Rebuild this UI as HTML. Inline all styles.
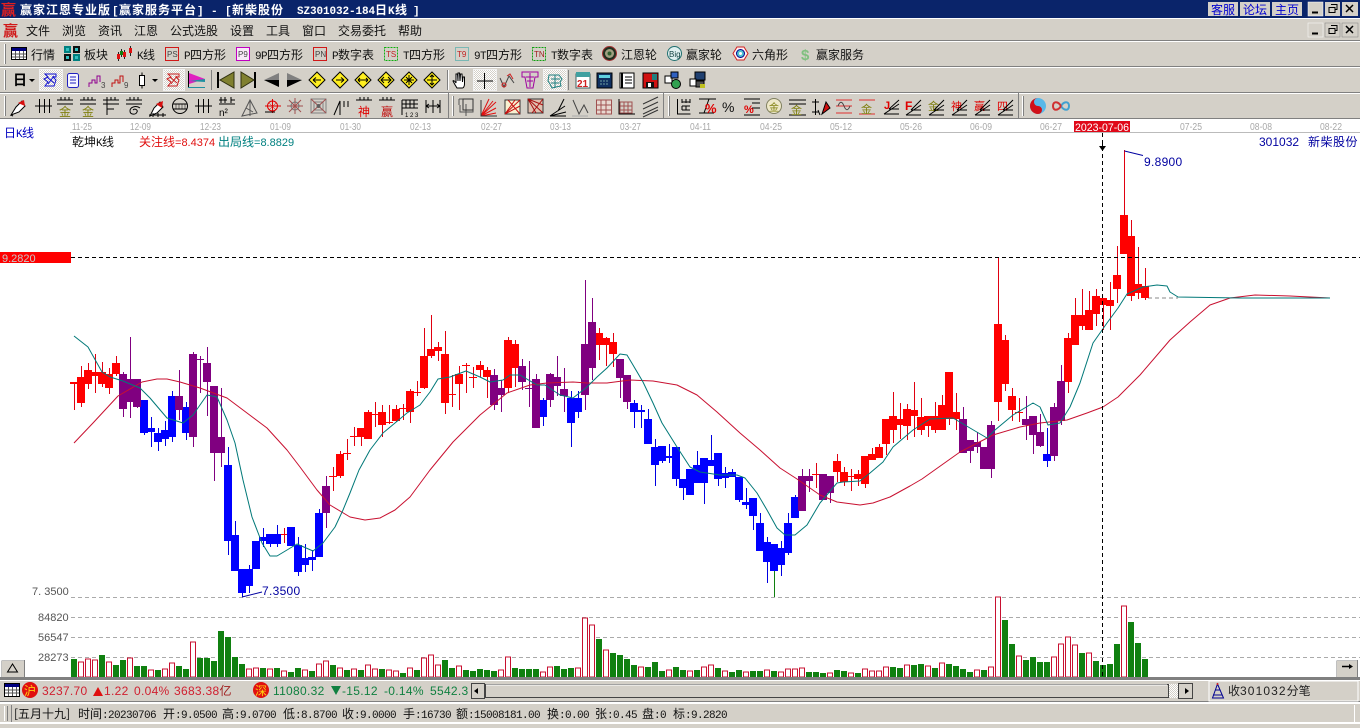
<!DOCTYPE html>
<html><head><meta charset="utf-8"><style>
html,body{margin:0;padding:0;background:#d4d0c8;width:1360px;height:728px;overflow:hidden}
svg{display:block;position:absolute;left:0;top:0}
text{font-family:"WenQuanYi Zen Hei","Noto Sans CJK SC",sans-serif;font-size:12px;white-space:pre}
.m{font-family:"Liberation Mono",monospace;font-size:11px;letter-spacing:-.6px}
.mb{font-family:"Liberation Mono",monospace;font-size:11px;letter-spacing:-.1px}
.a{font-family:"Liberation Sans","Noto Sans CJK SC",sans-serif}
.d{font-family:"Liberation Sans",sans-serif;font-size:10px;fill:#a8a8a8}
.l{font-family:"Liberation Sans",sans-serif;font-size:11px;fill:#555}
.s{font-family:"Liberation Sans",sans-serif;font-size:12px;letter-spacing:.3px}
.t{font-family:"Liberation Mono",monospace;font-size:11px;letter-spacing:-.6px;fill:#111}
.k{fill:none;stroke:#000}
.r{fill:none;stroke:#e00000}
.g{fill:none;stroke:#444}
.sm{font-family:"Liberation Sans",sans-serif;font-size:8px}
</style></head><body>
<svg width="1360" height="728" viewBox="0 0 1360 728" xmlns="http://www.w3.org/2000/svg">
<defs><pattern id="dz" width="2" height="2" patternUnits="userSpaceOnUse"><rect width="2" height="2" fill="#ffffff"/><rect width="1" height="1" fill="#d4d0c8"/><rect x="1" y="1" width="1" height="1" fill="#d4d0c8"/></pattern></defs>
<!-- title bar -->
<rect width="1360" height="18" fill="#0a246a"/>
<rect y="18" width="1360" height="1" fill="#fff"/>
<text x="1" y="15" fill="#e02020" font-weight="bold" style="font-size:15px">赢</text>
<g fill="#fff" font-weight="bold">
<text x="20" y="14" style="letter-spacing:1px">赢家江恩专业版</text>
<text x="112" y="14" class="mb">[</text>
<text x="119" y="14" style="letter-spacing:1px">赢家服务平台</text>
<text x="197" y="14" class="mb">]</text>
<text x="211" y="14" class="mb">-</text>
<text x="225" y="14" class="mb">[</text>
<text x="232" y="14" style="letter-spacing:1px">新柴股份</text>
<text x="297" y="14" class="mb">SZ301032-184</text>
<text x="375" y="14">日</text>
<text x="388" y="14" class="mb">K</text>
<text x="395" y="14">线</text>
<text x="413" y="14" class="mb">]</text>
</g>
<g>
<rect x="1208" y="2" width="30" height="14" fill="#d4d0c8"/><rect x="1240" y="2" width="30" height="14" fill="#d4d0c8"/><rect x="1272" y="2" width="30" height="14" fill="#d4d0c8"/>
<text x="1211" y="14" fill="#0000d0">客服</text><text x="1243" y="14" fill="#0000d0">论坛</text><text x="1275" y="14" fill="#0000d0">主页</text>
</g>
<g id="wb">
<rect x="1308" y="2" width="15" height="14" fill="#d4d0c8" stroke="#fff" stroke-width=".5"/><rect x="1325" y="2" width="15" height="14" fill="#d4d0c8"/><rect x="1342" y="2" width="16" height="14" fill="#d4d0c8"/>
<path d="M1312 12.5h6" stroke="#000" stroke-width="2"/>
<path d="M1331 4.5h6v5h-2M1329 7.5h6v5h-6z" class="k"/>
<path d="M1346 5l7 7M1353 5l-7 7" stroke="#000" stroke-width="1.5"/>
</g>
<g transform="translate(0,21)">
<rect x="1308" y="2" width="15" height="14" fill="#d4d0c8" stroke="#fff" stroke-width=".5"/><rect x="1325" y="2" width="15" height="14" fill="#d4d0c8" stroke="#808080" stroke-width=".5"/><rect x="1342" y="2" width="16" height="14" fill="#d4d0c8" stroke="#808080" stroke-width=".5"/>
<path d="M1312 12.5h6" stroke="#000" stroke-width="2"/>
<path d="M1331 4.5h6v5h-2M1329 7.5h6v5h-6z" class="k"/>
<path d="M1346 5l7 7M1353 5l-7 7" stroke="#000" stroke-width="1.5"/>
</g>
<!-- menu -->
<text x="3" y="36" fill="#d01818" style="font-size:15px" font-weight="bold">赢</text>
<g fill="#111">
<text x="26" y="35">文件</text><text x="62" y="35">浏览</text><text x="98" y="35">资讯</text><text x="134" y="35">江恩</text><text x="170" y="35">公式选股</text><text x="230" y="35">设置</text><text x="266" y="35">工具</text><text x="302" y="35">窗口</text><text x="338" y="35">交易委托</text><text x="398" y="35">帮助</text>
</g>
<!-- band separators -->
<g fill="#808080"><rect y="40" width="1360" height="1"/><rect y="66" width="1360" height="1"/><rect y="92" width="1360" height="1"/><rect y="118" width="1360" height="1"/></g>
<g fill="#fff"><rect y="41" width="1360" height="1"/><rect y="67" width="1360" height="1"/><rect y="93" width="1360" height="1"/></g>
<g fill="#fff"><rect x="4" y="44" width="1" height="20"/><rect x="4" y="70" width="1" height="20"/><rect x="4" y="96" width="1" height="20"/><rect x="452" y="96" width="1" height="20"/><rect x="668" y="96" width="1" height="20"/><rect x="1022" y="96" width="1" height="20"/><rect x="448" y="70" width="1" height="20"/></g>
<g fill="#808080"><rect x="5" y="44" width="1" height="20"/><rect x="5" y="70" width="1" height="20"/><rect x="5" y="96" width="1" height="20"/><rect x="453" y="96" width="1" height="20"/><rect x="669" y="96" width="1" height="20"/><rect x="1023" y="96" width="1" height="20"/><rect x="211" y="70" width="1" height="20"/><rect x="447" y="70" width="1" height="20"/><rect x="568" y="70" width="1" height="20"/><rect x="448" y="93" width="1" height="25"/><rect x="663" y="93" width="1" height="25"/><rect x="1018" y="93" width="1" height="25"/></g>
<!-- row 1 -->
<rect x="11.5" y="47.5" width="15" height="12" fill="#fff" stroke="#000"/><rect x="12" y="48" width="14" height="3" fill="#000080"/><path d="M12 54h14M12 57h14M15.5 51v8M19.5 51v8M23.5 51v8" stroke="#555"/>
<g fill="#008080"><rect x="64" y="46" width="7" height="7"/><rect x="73" y="54" width="7" height="7"/></g><g fill="#111"><rect x="73" y="46" width="7" height="7"/><rect x="64" y="54" width="7" height="7"/></g><g fill="#30c0c0"><rect x="66" y="48" width="3" height="3"/><rect x="75" y="56" width="3" height="3"/><rect x="75" y="48" width="3" height="3"/><rect x="66" y="56" width="3" height="3"/></g>
<path d="M118.5 52v9M124.5 50v9M130.5 46v10" stroke="#222"/><path d="M121.5 49v8" stroke="#222"/><g fill="#e01010"><rect x="117" y="54" width="3" height="5"/><rect x="123" y="52" width="3" height="5"/><rect x="129" y="48" width="3" height="5"/></g><rect x="120" y="51" width="3" height="4" fill="#108010"/>
<text x="31" y="59" fill="#111">行情</text><text x="84" y="59" fill="#111">板块</text>
<text x="137" y="59" fill="#111"><tspan class="m">K</tspan>线</text>
<g>
<rect x="165.5" y="47.5" width="13" height="13" fill="none" stroke="#d01818"/><text x="167" y="57" class="sm" fill="#444">PS</text>
<rect x="236.5" y="47.5" width="13" height="13" fill="#f8e8f8" stroke="#c000c0"/><text x="238" y="57" class="sm" fill="#444">P9</text>
<rect x="313.5" y="47.5" width="13" height="13" fill="none" stroke="#d01818"/><text x="315" y="57" class="sm" fill="#444">PN</text>
<rect x="384.5" y="47.5" width="13" height="13" fill="none" stroke="#10b010" stroke-dasharray="2 1"/><text x="386" y="57" class="sm" fill="#c02020">TS</text>
<rect x="455.5" y="47.5" width="13" height="13" fill="none" stroke="#20a0a0" stroke-dasharray="1 1"/><text x="457" y="57" class="sm" fill="#c02020">T9</text>
<rect x="532.5" y="47.5" width="13" height="13" fill="none" stroke="#10a010" stroke-dasharray="2 1"/><text x="534" y="57" class="sm" fill="#a02020">TN</text>
</g>
<g fill="#111">
<text x="184" y="59"><tspan class="m">P</tspan>四方形</text>
<text x="255" y="59"><tspan class="m">9P</tspan>四方形</text>
<text x="332" y="59"><tspan class="m">P</tspan>数字表</text>
<text x="403" y="59"><tspan class="m">T</tspan>四方形</text>
<text x="474" y="59"><tspan class="m">9T</tspan>四方形</text>
<text x="551" y="59"><tspan class="m">T</tspan>数字表</text>
<text x="621" y="59">江恩轮</text><text x="686" y="59">赢家轮</text><text x="752" y="59">六角形</text><text x="816" y="59">赢家服务</text>
</g>
<circle cx="609.5" cy="53.5" r="7" fill="#203020" stroke="#a03030"/><circle cx="609.5" cy="53.5" r="4.5" fill="#a0a080"/><circle cx="609.5" cy="53.5" r="2" fill="#306030"/>
<circle cx="674.5" cy="53.5" r="7" fill="#dff0f0" stroke="#207070"/><text x="669" y="57" class="sm" fill="#104040">Big</text>
<path d="M737 47h7l4 6.5-4 6.5h-7l-4-6.5z" fill="#fff0f0" stroke="#d02020"/><circle cx="740.5" cy="53.5" r="4" fill="#50c0d0" stroke="#000090"/><circle cx="740.5" cy="53.5" r="1.5" fill="#fff"/>
<text x="801" y="60" fill="#80c080" font-weight="bold" style="font-size:15px" class="a">$</text>
<!-- row 2 -->
<text x="13" y="85" fill="#000" font-weight="bold" style="font-size:14px">日</text>
<path d="M29 79h6l-3 3z" fill="#000"/>
<rect x="39.5" y="69.5" width="23" height="21" fill="url(#dz)" stroke="#f0f0f0"/>
<path d="M45 74h11v3h-3l3 3-2 6h-9l3-4-4-3 4-2zM47 77l7 6M54 76l-6 8" fill="none" stroke="#1010d0"/>
<rect x="67.5" y="73.5" width="11" height="14" rx="2" fill="#f4f4ff" stroke="#2020c0"/><path d="M70 77h6M70 80h6M70 83h6" stroke="#2020c0"/>
<path d="M89 87v-4h3v-3h3v3h2v-7h3v6" fill="none" stroke="#900090"/><text x="101" y="88" class="sm" fill="#444">3</text>
<path d="M112 87v-4h3v-3h3v3h2v-7h3v6" fill="none" stroke="#c01010"/><text x="124" y="88" class="sm" fill="#444">9</text>
<path d="M142 72.5v16" stroke="#000"/><rect x="139.5" y="75.5" width="5" height="10" fill="#fff" stroke="#000"/>
<path d="M152 79h6l-3 3z" fill="#000"/>
<rect x="163.5" y="69.5" width="21" height="21" fill="url(#dz)" stroke="#f0f0f0"/>
<path d="M168 74h11v3h-3l3 3-2 6h-9l3-4-4-3 4-2zM170 77l7 6M177 76l-6 8" fill="none" stroke="#c82020"/>
<path d="M188.5 71v17" stroke="#000"/><path d="M189 73l16 6-16 5z" fill="#e020c0"/><path d="M189 81l16-2v3z" fill="#2090a0"/><path d="M188 87.5h17" stroke="#2090a0"/>
<path d="M217.5 72v16M218.5 72v16" stroke="#000"/><path d="M234 72v16l-14-8z" fill="#808030" stroke="#303010"/>
<path d="M255.5 72v16M254.5 72v16" stroke="#000"/><path d="M241 72v16l13-8z" fill="#808030" stroke="#303010"/>
<path d="M264 80l15-7v14z" fill="#808080"/><path d="M264 80l15 0v7z" fill="#000"/>
<path d="M302 80l-15-7v14z" fill="#808080"/><path d="M302 80l-15 0v7z" fill="#000"/>
<g fill="#ffef20" stroke="#000"><path d="M317 72l8 8-8 8-8-8z"/><path d="M340 72l8 8-8 8-8-8z"/><path d="M363 72l8 8-8 8-8-8z"/><path d="M386 72l8 8-8 8-8-8z"/><path d="M409 72l8 8-8 8-8-8z"/><path d="M432 72l8 8-8 8-8-8z"/></g>
<path d="M313 80h8M313 80l3-2.500M313 80l3 2.500M336 80h8M344 80l-3-2.500M344 80l-3 2.500M358 80h10M358 80l2-2M358 80l2 2M368 80l-2-2M368 80l-2 2M381 80h10M384 77l-3 3 3 3M388 77l3 3-3 3M409 75v10M404 80h10M406 77l6 6M412 77l-6 6M432 75v10M427 80h10M430 77l2-2 2 2M430 83l2 2 2-2" stroke="#000" fill="none"/>
<path d="M457 88c-2-3-3-5-4-7 0-1 2 0 3 2l0-9 1.500 0 .5 7 0-8 1.500 0 .5 8 .5-7 1.500 0 .5 8 .5-5 1.500 0 0 7c0 2-1 4-2 4z" fill="#fff" stroke="#000"/>
<rect x="473.500" y="69.500" width="23" height="21" fill="url(#dz)" stroke="#f0f0f0"/><path d="M484.500 73v16M477 81h16" stroke="#000"/>
<path d="M500 78l4 9 5-11 5 7" fill="none" stroke="#444"/><circle cx="504" cy="85" r="2" fill="none" stroke="#d02020"/><path d="M507 76l3-2 3 5" fill="none" stroke="#d02020"/>
<path d="M522 72h16v5h-3l-2 11h-6l-2-11h-3z" fill="none" stroke="#a000a0"/><path d="M526 77h8M530 73v14M527 81h6" stroke="#a000a0"/>
<rect x="543.500" y="69.500" width="23" height="21" fill="url(#dz)" stroke="#f0f0f0"/>
<path d="M549 75h10l3 4-2 3 1 4-5 1-4 1-2-4-2-3zM551 79h9M551 83h8M555 75v13" fill="none" stroke="#208080"/>
<rect x="576" y="74" width="14" height="14" fill="#fff" stroke="#406060"/><rect x="576" y="72" width="14" height="5" fill="#40a0a0"/><text x="577" y="87" class="sm" fill="#d02020" font-weight="bold" style="font-size:10px">21</text>
<rect x="597" y="73" width="15" height="15" fill="#103060" stroke="#000"/><rect x="599" y="75" width="11" height="3" fill="#60d0e0"/><path d="M600 81h9M600 84h9" stroke="#70a0a0" stroke-dasharray="2 1"/>
<rect x="620" y="73" width="14" height="15" fill="#fff" stroke="#000"/><path d="M622 73v15" stroke="#000" stroke-width="2"/><path d="M625 77h7M625 80h7M625 83h7" stroke="#000"/>
<rect x="643" y="73" width="15" height="15" fill="#d01010" stroke="#000"/><rect x="652" y="74" width="5" height="6" fill="#208080"/><rect x="646" y="82" width="8" height="6" fill="#111"/><rect x="648" y="83" width="3" height="4" fill="#fff"/>
<rect x="665" y="76" width="7" height="7" fill="#fff" stroke="#000"/><rect x="671" y="72" width="7" height="6" fill="#3060c0" stroke="#000"/><circle cx="676" cy="84" r="4.500" fill="#30a050" stroke="#000"/>
<rect x="695" y="72" width="10" height="8" fill="#204070" stroke="#000"/><rect x="690" y="79" width="6" height="7" fill="#fff" stroke="#000"/><rect x="696" y="81" width="8" height="6" fill="#505050" stroke="#000"/><rect x="700" y="84" width="5" height="4" fill="#c0c020"/>
<!-- row 3 -->
<path d="M11 115l5-8 6-6 3 5-6 6z" fill="#fff" stroke="#000"/><path d="M18 103l6-3 1 6z" fill="#d81010"/><path d="M11 115l2 1" stroke="#000"/>
<path d="M39.500 99v14M44.500 99v14M49.500 99v14M35 106h17" class="k"/>
<g transform="translate(0,0)"><path d="M57 100h16M61 97v3M65 97v3M69 97v3M57 104h16" class="k"/><text x="59" y="116" fill="#808010" style="font-size:12px">金</text></g>
<path d="M80 100h16M84 97v3M88 97v3M92 97v3M80 104h16" class="k"/><text x="82" y="116" fill="#808010" style="font-size:12px">金</text>
<path d="M103 100h16M107 97v3M111 97v3M115 97v3M103 104h16M107 100v15M107 104h9M107 109h7" class="k"/>
<path d="M126 100h16M130 97v3M134 97v3M138 97v3M126 104h16M140 108c-4-3-10-1-10 3 0 4 6 4 7 1 1-2-2-4-4-2" class="k"/>
<path d="M150 116l4-8 6-6 3 5-6 6z" fill="#fff" stroke="#000"/><path d="M156 104l7-3-1 7z" fill="#d81010"/><path d="M149 115h17M153 113v4M158 113v4M163 113v4" class="k"/>
<circle cx="180" cy="106" r="7.500" class="k"/><path d="M173 104h14M173 109h14" class="k"/><path d="M176 104v5M179 104v5M182 104v5M185 104v5" class="k" stroke-width=".5"/>
<path d="M198.500 99v14M203.500 99v14M208.500 99v14M195 106h17" class="k"/>
<path d="M219 100h8M231 100h4M221 97v6M225 97v6M231 97v6M219 104h16" class="k"/><text x="219" y="116" class="a" style="font-size:10px">n²</text>
<path d="M242 116l8-16 7 13zM250 100v16M246 108l7 4" stroke="#555" fill="none"/>
<circle cx="272.500" cy="106" r="5" class="r"/><path d="M265 106h16M272.500 99v14" class="r"/><path d="M269 103l7 7M276 103l-7 7" stroke="#e00000" stroke-width=".5"/><path d="M265 112h10" class="k"/>
<circle cx="295" cy="106" r="4" stroke="#608080" fill="none"/><path d="M287 106h16M295 98v16M289 100l12 12M301 100l-12 12" stroke="#a05050"/>
<rect x="311" y="99" width="15" height="14" fill="none" stroke="#808080"/><rect x="314" y="102" width="9" height="8" fill="none" stroke="#808080"/><path d="M311 99l15 14M326 99l-15 14" stroke="#a05050"/><circle cx="318.500" cy="106" r="2" fill="#606060"/>
<path d="M334 115l6-14v14M344 101v6M348 101v6" class="k"/>
<path d="M356 100h16M360 97v3M364 97v3M368 97v3" class="k"/><text x="358" y="116" fill="#e00000" style="font-size:12px">神</text>
<path d="M379 100h16M383 97v3M387 97v3M391 97v3" class="k"/><text x="381" y="116" fill="#c01010" style="font-size:12px">赢</text>
<path d="M402 100h16M402 100v15M402 104h16M402 108h16M406 100v8M410 100v8M414 100v8" class="k"/><text x="405" y="117" class="a" style="font-size:6px">1 2 3</text>
<path d="M426 100v13M440 100v13M426 106h14M426 106l3-2M426 106l3 2M440 106l-3-2M440 106l-3 2M433 100v13" class="k"/>
<!-- second group -->
<path d="M459 99h4M459 99v6M469 99h4v13h-13v-7M463 99h6M466 104v12" stroke="#555" fill="none"/><rect x="463" y="99" width="10" height="11" fill="none" stroke="#333"/>
<path d="M481 116l15-14M481 116l15-8M481 116l12-15M481 116l8-17M481 116l15-3" stroke="#e01010" fill="none"/><path d="M481 100v16h16" stroke="#333" fill="none"/>
<rect x="505" y="100" width="15" height="14" fill="#f8f0d0" stroke="#333"/><path d="M505 114l15-14M505 114l10-14M505 114l15-8M508 100l12 14" stroke="#c81010" fill="none"/>
<rect x="528" y="99" width="15" height="14" fill="#e0c0b0" stroke="#333"/><path d="M528 99l15 14M528 99l15 6M528 99l8 14M532 113l11-14" stroke="#a81010" fill="none"/>
<path d="M550 116l15-10M550 116l16-4M550 116h16M558 111l6-12" stroke="#000" fill="none"/>
<path d="M573 100l6 14 5-9 4 8" stroke="#444" fill="none"/><path d="M572 116h16" stroke="#aaa"/>
<rect x="596.500" y="100" width="15" height="14" fill="#e8d8d0" stroke="#a05050"/><path d="M601 100v14M606 100v14M597 105h15M597 110h15" stroke="#a05050"/>
<path d="M619 99v15h16" stroke="#000" fill="none"/><path d="M620 102h12v11h-12zM624 102v11M628 102v11M620 106h12M620 110h12" stroke="#a05050" fill="none"/>
<path d="M643 104l15-7M643 109l15-7M643 114l15-7M643 117l15-7" stroke="#333" fill="none"/>
<!-- third group -->
<path d="M677.500 99v15h13M682 102h8M682 106h8M682 110h8M682 99v4M686 99v4M690 99v4M682 106v4M686 106v4" class="k"/>
<path d="M699 99h17M699 113h15M704 113l5-14" class="k"/><text x="705" y="113" fill="#e00000" class="a" style="font-size:13px;font-weight:bold">%</text>
<text x="722" y="112" class="a" style="font-size:14px" fill="#111">%</text>
<path d="M744 99h16M744 115h16M752 103h8M752 108h8" class="k"/><text x="744" y="113" fill="#e00000" class="a" style="font-size:11px;font-weight:bold">%</text>
<circle cx="774" cy="106" r="7.500" fill="#eee8c8" stroke="#808060"/><text x="769" y="111" fill="#808010" style="font-size:10px">金</text>
<path d="M789 100h17M789 104h17M789 115h17" class="k"/><text x="791" y="114" fill="#808010" style="font-size:11px">金</text>
<path d="M815.500 99v16M812 102h7M812 112h7" class="k"/><path d="M822 114l4-12 4 6z" fill="#d01010" stroke="#000"/><path d="M820 115l-2-5" class="k"/>
<path d="M836 100h16M836 106h16M836 113h16" stroke="#e03030"/><path d="M838 106c2-5 4-5 6 0s4 5 6 0" stroke="#444" fill="none"/>
<path d="M859 100h16M859 114h16" stroke="#e03030"/><text x="861" y="113" fill="#808010" style="font-size:11px">金</text>
<text x="884" y="109" fill="#e00000" class="a" style="font-size:11px;font-weight:bold">J</text><path d="M884 114l15-10M884 114h15M889 109l10-9M889 109h10" class="k"/>
<text x="905" y="110" fill="#e00000" class="a" style="font-size:12px;font-weight:bold">F</text><path d="M906 115l15-10M906 115h15M911 110l10-10M911 110h10" class="k"/>
<text x="928" y="110" fill="#808010" style="font-size:11px">金</text><path d="M929 115l15-10M929 115h15M934 110l10-10M934 110h10" class="k"/>
<text x="951" y="110" fill="#e00000" style="font-size:11px">神</text><path d="M952 115l15-10M952 115h15M957 110l10-10M957 110h10" class="k"/>
<text x="974" y="110" fill="#e00000" style="font-size:11px">赢</text><path d="M975 115l15-10M975 115h15M980 110l10-10M980 110h10" class="k"/>
<text x="997" y="110" fill="#e00000" style="font-size:11px">四</text><path d="M998 115l15-10M998 115h15M1003 110l10-10M1003 110h10" class="k"/>
<circle cx="1038" cy="106" r="8" fill="#58b8e8"/><path d="M1038 98a8 8 0 0 0 0 16a4 4 0 0 0 0-8a4 4 0 0 1 0-8z" fill="#d01018"/><circle cx="1038" cy="102" r="1.500" fill="#58b8e8"/><circle cx="1038" cy="110" r="1.500" fill="#d01018"/>
<path d="M1061 106c3-5 8-5 8 0s-5 5-8 0" fill="none" stroke="#40a0d0" stroke-width="2"/><path d="M1061 106c-3-5-8-5-8 0s5 5 8 0" fill="none" stroke="#d03030" stroke-width="2"/>
<!-- chart area -->
<rect y="119" width="1360" height="558" fill="#fff"/>
<rect x="70" y="132" width="1290" height="1" fill="#bbb"/>
<g class="d">
<text class="d" x="72" y="130" textLength="20" lengthAdjust="spacingAndGlyphs">11-25</text>
<text class="d" x="130" y="130" textLength="21" lengthAdjust="spacingAndGlyphs">12-09</text>
<text class="d" x="200" y="130" textLength="21" lengthAdjust="spacingAndGlyphs">12-23</text>
<text class="d" x="270" y="130" textLength="21" lengthAdjust="spacingAndGlyphs">01-09</text>
<text class="d" x="340" y="130" textLength="21" lengthAdjust="spacingAndGlyphs">01-30</text>
<text class="d" x="410" y="130" textLength="21" lengthAdjust="spacingAndGlyphs">02-13</text>
<text class="d" x="481" y="130" textLength="21" lengthAdjust="spacingAndGlyphs">02-27</text>
<text class="d" x="550" y="130" textLength="21" lengthAdjust="spacingAndGlyphs">03-13</text>
<text class="d" x="620" y="130" textLength="21" lengthAdjust="spacingAndGlyphs">03-27</text>
<text class="d" x="690" y="130" textLength="21" lengthAdjust="spacingAndGlyphs">04-11</text>
<text class="d" x="760" y="130" textLength="22" lengthAdjust="spacingAndGlyphs">04-25</text>
<text class="d" x="830" y="130" textLength="22" lengthAdjust="spacingAndGlyphs">05-12</text>
<text class="d" x="900" y="130" textLength="22" lengthAdjust="spacingAndGlyphs">05-26</text>
<text class="d" x="970" y="130" textLength="22" lengthAdjust="spacingAndGlyphs">06-09</text>
<text class="d" x="1040" y="130" textLength="22" lengthAdjust="spacingAndGlyphs">06-27</text>
<text class="d" x="1180" y="130" textLength="22" lengthAdjust="spacingAndGlyphs">07-25</text>
<text class="d" x="1250" y="130" textLength="22" lengthAdjust="spacingAndGlyphs">08-08</text>
<text class="d" x="1320" y="130" textLength="22" lengthAdjust="spacingAndGlyphs">08-22</text>
</g>
<rect x="1074" y="121" width="56" height="11" fill="#e00818"/>
<text x="1075" y="131" class="a" fill="#fff" style="font-size:11px" textLength="54" lengthAdjust="spacingAndGlyphs">2023-07-06</text>
<text x="4" y="137" fill="#0000c0">日<tspan class="m">K</tspan>线</text>
<text x="72" y="146" fill="#111">乾坤<tspan class="m">K</tspan>线</text>
<text x="139" y="146" fill="#e01010">关注线<tspan class="a" style="font-size:11px">=8.4374</tspan></text>
<text x="218" y="146" fill="#008080">出局线<tspan class="a" style="font-size:11px">=8.8829</tspan></text>
<text x="1259" y="146" class="a" fill="#0000a0" style="font-size:12px">301032</text>
<text x="1308" y="146" fill="#0000a0" style="letter-spacing:.5px">新柴股份</text>
<rect x="0" y="252" width="71" height="11" fill="#ff0000"/>
<text x="2" y="262" class="a" fill="#c8c8c8" style="font-size:11px">9.2820</text>
<!-- grid -->
<path d="M71 597.500H1360M71 617.500H1360M71 637.500H1360M71 657.500H1360" stroke="#aaa" stroke-dasharray="4 3" fill="none"/>
<path d="M1148 298H1178" stroke="#888" stroke-dasharray="4 3" fill="none"/>
<text x="32" y="595" class="l">7. 3500</text>
<text x="38" y="621" class="l">84820</text><text x="38" y="641" class="l">56547</text><text x="38" y="661" class="l">28273</text>
<!-- volume -->
<path stroke="#108010" stroke-width="6" fill="none" d="M74 659V677M102 655V677M116 665V677M123 660V677M137 666V677M144 666V677M158 670V677M179 666V677M186 669V677M200 658V677M207 658V677M214 661V677M221 631V677M228 637V677M235 657V677M242 664V677M263 668V677M277 668V677M291 672V677M298 668V677M312 671V677M333 665V677M347 670V677M361 670V677M382 669V677M403 673V677M417 670V677M445 660V677M452 668V677M466 670V677M473 671V677M480 669V677M487 670V677M494 671V677M515 668V677M522 669V677M529 669V677M536 669V677M557 666V677M564 669V677M571 668V677M599 639V677M613 653V677M620 655V677M627 659V677M634 665V677M648 667V677M655 662V677M662 671V677M676 667V677M683 670V677M697 670V677M718 668V677M732 672V677M739 670V677M753 671V677M760 671V677M774 671V677M809 672V677M816 672V677M823 673V677M837 670V677M844 671V677M858 673V677M893 667V677M900 668V677M914 665V677M921 664V677M935 668V677M949 664V677M956 666V677M963 669V677M970 672V677M984 670V677M1005 620V677M1012 644V677M1026 660V677M1033 657V677M1040 662V677M1047 662V677M1082 653V677M1096 661V677M1103 665V677M1110 664V677M1117 644V677M1131 622V677M1138 643V677M1145 659V677"/>
<path stroke="#c81030" fill="#fff" d="M78.500 662h5V677h-5zM85.500 659h5V677h-5zM92.500 660h5V677h-5zM106.500 662h5V677h-5zM127.500 658h5V677h-5zM148.500 670h5V677h-5zM162.500 669h5V677h-5zM169.500 663h5V677h-5zM190.500 642h5V677h-5zM246.500 669h5V677h-5zM253.500 668h5V677h-5zM267.500 669h5V677h-5zM281.500 671h5V677h-5zM302.500 670h5V677h-5zM316.500 664h5V677h-5zM323.500 661h5V677h-5zM337.500 668h5V677h-5zM351.500 669h5V677h-5zM365.500 665h5V677h-5zM372.500 669h5V677h-5zM386.500 670h5V677h-5zM393.500 671h5V677h-5zM407.500 668h5V677h-5zM421.500 658h5V677h-5zM428.500 655h5V677h-5zM435.500 665h5V677h-5zM456.500 666h5V677h-5zM498.500 670h5V677h-5zM505.500 657h5V677h-5zM540.500 672h5V677h-5zM547.500 667h5V677h-5zM575.500 668h5V677h-5zM582.500 618h5V677h-5zM589.500 625h5V677h-5zM603.500 650h5V677h-5zM638.500 667h5V677h-5zM666.500 670h5V677h-5zM687.500 671h5V677h-5zM701.500 667h5V677h-5zM708.500 665h5V677h-5zM722.500 671h5V677h-5zM743.500 672h5V677h-5zM764.500 670h5V677h-5zM778.500 672h5V677h-5zM785.500 669h5V677h-5zM792.500 669h5V677h-5zM799.500 668h5V677h-5zM827.500 673h5V677h-5zM848.500 673h5V677h-5zM862.500 669h5V677h-5zM869.500 671h5V677h-5zM876.500 671h5V677h-5zM883.500 667h5V677h-5zM904.500 665h5V677h-5zM925.500 666h5V677h-5zM939.500 663h5V677h-5zM974.500 670h5V677h-5zM988.500 667h5V677h-5zM995.500 597h5V677h-5zM1016.500 656h5V677h-5zM1051.500 657h5V677h-5zM1058.500 644h5V677h-5zM1065.500 637h5V677h-5zM1072.500 645h5V677h-5zM1086.500 653h5V677h-5zM1121.500 606h5V677h-5z"/>
<!-- wicks -->
<path stroke="#e00010" fill="none" d="M74.500 382V410M81.500 366V407M88.500 363V389M95.500 354V393M102.500 362V387M109.500 368V394M116.500 356V376M284.500 528V543M333.500 467V491M340.500 451V478M347.500 439V460M354.500 427V446M361.500 428V446M368.500 410V439M375.500 402V427M382.500 405V437M389.500 405V424M396.500 405V422M403.500 404V420M410.500 389V423M417.500 381V396M424.500 328V389M431.500 315V358M438.500 342V361M445.500 331V414M452.500 375V407M459.500 366V410M466.500 363V393M473.500 367V388M480.500 361V377M487.500 367V398M508.500 337V393M515.500 340V387M599.500 328V360M606.500 337V366M613.500 333V367M816.500 463V488M837.500 454V482M844.500 467V486M851.500 469V491M858.500 470V486M865.500 456V488M872.500 448V460M879.500 444V458M886.500 419V455M893.500 392V443M900.500 403V439M907.500 404V440M914.500 382V437M921.500 398V435M928.500 416V437M935.500 402V433M942.500 395V430M949.500 372V425M956.500 393V430M998.500 257V421M1005.500 335V391M1012.500 388V421M1019.500 398V422M1068.500 333V393M1075.500 298V345M1082.500 289V330M1089.500 291V330M1096.500 289V326M1103.500 298V330M1110.500 282V330M1117.500 246V303M1124.500 150V254M1131.500 220V301M1138.500 247V299M1145.500 268V300"/>
<path stroke="#0000e0" fill="none" d="M144.500 400V435M151.500 417V447M158.500 428V451M165.500 421V446M172.500 391V442M186.500 402V440M228.500 447V555M235.500 521V571M242.500 569V597M249.500 565V593M256.500 541V569M263.500 528V547M270.500 534V547M277.500 525V547M291.500 527V546M298.500 537V576M305.500 544V572M312.500 550V571M319.500 509V557M543.500 398V426M571.500 391V447M578.500 391V418M634.500 400V428M641.500 405V428M648.500 409V444M655.500 439V486M662.500 446V463M669.500 444V463M676.500 447V486M683.500 479V500M690.500 469V495M697.500 451V483M704.500 458V504M711.500 435V466M718.500 453V486M725.500 467V488M732.500 469V477M739.500 477V502M746.500 488V509M753.500 498V530M760.500 513V551M767.500 537V583M774.500 544V571M781.500 541V576M788.500 513V555M795.500 495V518M1047.500 428V467"/>
<path stroke="#108010" fill="none" d="M774.500 571V597"/>
<path stroke="#800080" fill="none" d="M123.500 372V417M130.500 337V418M137.500 379V408M179.500 370V420M193.500 352V447M200.500 356V393M207.500 347V416M214.500 386V481M221.500 388V467M326.500 476V528M494.500 369V410M501.500 380V412M522.500 359V390M529.500 361V407M536.500 374V428M550.500 373V407M557.500 356V396M564.500 368V412M585.500 280V410M592.500 298V380M620.500 359V398M627.500 375V409M802.500 469V511M809.500 469V492M823.500 474V500M830.500 476V503M963.500 407V453M970.500 440V463M977.500 432V453M984.500 447V469M991.500 421V478M1026.500 396V440M1033.500 416V454M1040.500 414V447M1054.500 403V461M1061.500 365V425"/>
<!-- bodies -->
<g transform="translate(-.5,0)">
<path stroke="#ff0000" stroke-width="8" fill="none" d="M74.500 382V384M81.500 377V403M88.500 370V384M95.500 372V376M102.500 372V384M109.500 374V388M116.500 363V374M284.500 534V535M333.500 476V477M340.500 454V476M347.500 453V454M354.500 436V437M361.500 428V437M368.500 412V439M375.500 414V415M382.500 412V425M389.500 422V423M396.500 409V421M403.500 408V409M410.500 391V412M417.500 392V393M424.500 356V388M431.500 349V356M438.500 347V351M445.500 354V403M452.500 394V395M459.500 374V384M466.500 365V366M473.500 377V378M480.500 365V370M487.500 370V377M508.500 340V388M515.500 344V368M599.500 333V345M606.500 338V345M613.500 342V354M816.500 474V475M837.500 461V472M844.500 472V482M851.500 476V477M858.500 474V479M865.500 456V484M872.500 454V460M879.500 447V458M886.500 419V444M893.500 416V430M900.500 419V425M907.500 409V426M914.500 410V416M921.500 417V430M928.500 416V426M935.500 416V430M942.500 405V430M949.500 372V419M956.500 412V419M998.500 324V402M1005.500 340V384M1012.500 396V410M1019.500 412V413M1068.500 338V382M1075.500 315V345M1082.500 315V326M1089.500 310V330M1096.500 296V314M1103.500 298V305M1110.500 300V306M1117.500 275V289M1124.500 215V254M1131.500 236V296M1138.500 284V293M1145.500 286V298"/>
<path stroke="#0000ff" stroke-width="8" fill="none" d="M144.500 400V433M151.500 428V432M158.500 433V442M165.500 430V439M172.500 396V437M186.500 407V433M228.500 465V541M235.500 535V571M242.500 569V593M249.500 569V586M256.500 541V569M263.500 537V541M270.500 534V544M277.500 534V544M291.500 527V546M298.500 545V572M305.500 558V565M312.500 557V560M319.500 513V557M543.500 400V417M571.500 398V423M578.500 398V412M634.500 403V412M641.500 410V412M648.500 419V444M655.500 447V465M662.500 446V461M669.500 456V458M676.500 447V479M683.500 479V488M690.500 469V495M697.500 465V483M704.500 458V483M711.500 460V466M718.500 453V479M725.500 473V478M732.500 472V477M739.500 477V500M746.500 502V505M753.500 498V516M760.500 523V551M767.500 542V562M774.500 544V571M781.500 548V565M788.500 523V553M795.500 497V518M1047.500 454V461"/>
<path stroke="#800080" stroke-width="8" fill="none" d="M123.500 374V409M130.500 379V402M137.500 379V407M179.500 396V410M193.500 354V437M200.500 359V360M207.500 363V382M214.500 386V453M221.500 437V453M326.500 486V513M494.500 375V405M501.500 388V395M522.500 366V382M529.500 388V389M536.500 379V428M550.500 374V400M557.500 377V386M564.500 389V396M585.500 344V395M592.500 322V368M620.500 359V378M627.500 375V402M802.500 476V511M809.500 476V481M823.500 474V500M830.500 476V493M963.500 419V453M970.500 440V451M977.500 442V447M984.500 447V469M991.500 425V469M1026.500 419V425M1033.500 416V435M1040.500 432V446M1054.500 407V456M1061.500 381V421"/>
</g>
<!-- MAs -->
<polyline fill="none" stroke="#c81030" stroke-linejoin="round" points="74,443 93,423 118,396 142,382 157,379 167,379 180,382 200,388 227,398 247,413 267,428 287,450 300,467 317,490 330,505 350,517 365,520 380,518 395,510 410,497 430,470 453,442 480,415 507,393 530,385 547,383 573,382 587,383 607,383 630,380 653,381 677,385 697,395 717,412 740,433 760,450 780,468 797,479 820,495 837,502 860,505 873,503 890,497 910,486 922,479 960,452 993,435 1020,427 1040,423 1067,420 1087,413 1103,407 1118,397 1140,375 1170,340 1190,322 1210,305 1230,298 1255,295 1290,296 1330,298"/>
<polyline fill="none" stroke="#007878" stroke-linejoin="round" points="74,336 88,347 102,372 110,377 123,381 140,388 150,398 167,418 183,423 193,415 207,395 217,397 227,420 235,443 243,480 252,517 262,543 270,556 277,556 287,550 297,544 313,551 323,543 335,527 343,510 350,493 359,470 370,450 383,433 407,413 420,405 430,392 438,379 450,377 466,371 480,377 490,382 503,380 510,375 520,375 537,385 545,385 560,395 573,398 587,387 597,377 607,368 620,354 627,355 633,365 643,382 653,403 662,423 677,447 690,467 700,472 720,475 737,475 745,478 757,493 767,510 777,528 785,535 795,535 807,525 820,503 837,483 843,482 860,481 870,473 883,462 893,447 913,430 930,419 953,418 970,428 987,438 995,430 1013,415 1033,403 1040,407 1048,425 1060,423 1070,407 1080,383 1093,343 1107,323 1118,308 1127,294 1143,287 1157,285 1167,286 1170,292 1178,297 1240,298 1330,298"/>
<!-- cross -->
<path d="M71 257.500H1360" stroke="#000" stroke-dasharray="4 3" fill="none"/>
<path d="M1102.500 133V677" stroke="#000" stroke-dasharray="4 3" fill="none"/>
<path d="M1099 146h7l-3.500 5zM1102 143h1v4h-1z" fill="#000"/>
<!-- hi lo -->
<path d="M1124.500 151L1143 155.500M242 597L262 592" stroke="#0000a0" fill="none"/>
<text x="1144" y="166" class="s" fill="#0000a0">9.8900</text>
<text x="262" y="595" class="s" fill="#0000a0">7.3500</text>
<!-- buttons on chart -->
<rect x="1.500" y="660.500" width="23" height="17" fill="#d4d0c8" stroke="#808080"/><path d="M1 660h23M1 660v17" stroke="#fff"/><path d="M12.500 664l-5 8h10z" class="k"/>
<rect x="1336.500" y="660.500" width="21" height="17" fill="#d4d0c8" stroke="#808080"/><path d="M1336 660h21M1336 660v17" stroke="#fff"/><path d="M1342 666.500h9" stroke="#000" stroke-width="1.500"/><path d="M1349 664l4 2.500-4 2.500z" fill="#000"/>
<!-- status bars -->
<rect y="677" width="1360" height="3" fill="#808080"/>
<rect y="680" width="1360" height="48" fill="#d4d0c8"/>
<rect y="680" width="1360" height="1" fill="#fff"/>
<rect y="701" width="1360" height="1" fill="#808080"/>
<rect y="702" width="1360" height="2" fill="#fff"/>
<rect y="722" width="1360" height="2" fill="#fff"/>
<rect x="4.500" y="683.500" width="15" height="13" fill="#fff" stroke="#000"/><rect x="5" y="684" width="14" height="3" fill="#000080"/><path d="M5 690h14M5 693h14M8.500 687v9M12.500 687v9M16.500 687v9" stroke="#555"/>
<circle cx="30" cy="690" r="8" fill="#e01010"/><text x="24" y="695" fill="#ffd010">沪</text>
<g class="s" fill="#d02030">
<text x="42" y="695" class="s" fill="#d02030">3237.70</text>
<text x="104" y="695" class="s" fill="#d02030">1.22</text>
<text x="134" y="695" class="s" fill="#d02030">0.04%</text>
<text x="174" y="695" class="s" fill="#d02030">3683.38<tspan style="font-family:'WenQuanYi Zen Hei','Noto Sans CJK SC',sans-serif;font-size:12px" fill="#a02020">亿</tspan></text>
</g>
<path d="M93 696l5-9 5 9z" fill="#e01010"/>
<circle cx="261" cy="690" r="8" fill="#e01010"/><text x="255" y="695" fill="#ffd010">深</text>
<text x="273" y="695" class="s" fill="#108040">11080.32</text>
<path d="M331 686h10l-5 9z" fill="#108040"/>
<text x="342" y="695" class="s" fill="#108040">-15.12</text>
<text x="384" y="695" class="s" fill="#108040">-0.14%</text>
<text x="430" y="695" class="s" fill="#108040">5542.3</text>
<rect x="471.500" y="683.500" width="13" height="15" fill="#d4d0c8" stroke="#444"/><path d="M474 691l4-3v6z" fill="#000"/>
<rect x="485.500" y="684.500" width="683" height="13" fill="#d4d0c8" stroke="#444"/><path d="M486 685h681" stroke="#fff"/>
<rect x="1169" y="684" width="9" height="14" fill="url(#dz)"/>
<rect x="1178.500" y="683.500" width="14" height="15" fill="#d4d0c8" stroke="#444"/><path d="M1189 691l-4-3v6z" fill="#000"/>
<rect x="1209" y="681" width="149" height="20" fill="#d4d0c8" stroke="#fff"/>
<path d="M1217.500 684l-5 14h11zM1213 695h9M1215 690h5" fill="none" stroke="#000090"/><circle cx="1217.500" cy="684" r="1" fill="#d02020"/>
<text x="1228" y="695" fill="#222">收<tspan class="s" fill="#222" style="letter-spacing:1.1px">301032</tspan>分笔</text>
<rect x="7" y="706" width="1" height="15" fill="#808080"/><rect x="4" y="706" width="1" height="15" fill="#fff"/>
<rect x="11" y="705" width="1" height="17" fill="#808080"/><rect x="1354" y="705" width="1" height="17" fill="#fff"/>
<g fill="#111">
<text x="14" y="718">[五月十九]</text>
<text x="78" y="718">时间<tspan class="t">:20230706</tspan></text>
<text x="163" y="718">开<tspan class="t">:9.0500</tspan></text>
<text x="222" y="718">高<tspan class="t">:9.0700</tspan></text>
<text x="283" y="718">低<tspan class="t">:8.8700</tspan></text>
<text x="342" y="718">收<tspan class="t">:9.0000</tspan></text>
<text x="403" y="718">手<tspan class="t">:16730</tspan></text>
<text x="456" y="718">额<tspan class="t">:15008181.00</tspan></text>
<text x="547" y="718">换<tspan class="t">:0.00</tspan></text>
<text x="595" y="718">张<tspan class="t">:0.45</tspan></text>
<text x="642" y="718">盘<tspan class="t">:0</tspan></text>
<text x="673" y="718">标<tspan class="t">:9.2820</tspan></text>
</g>
</svg>
</body></html>
